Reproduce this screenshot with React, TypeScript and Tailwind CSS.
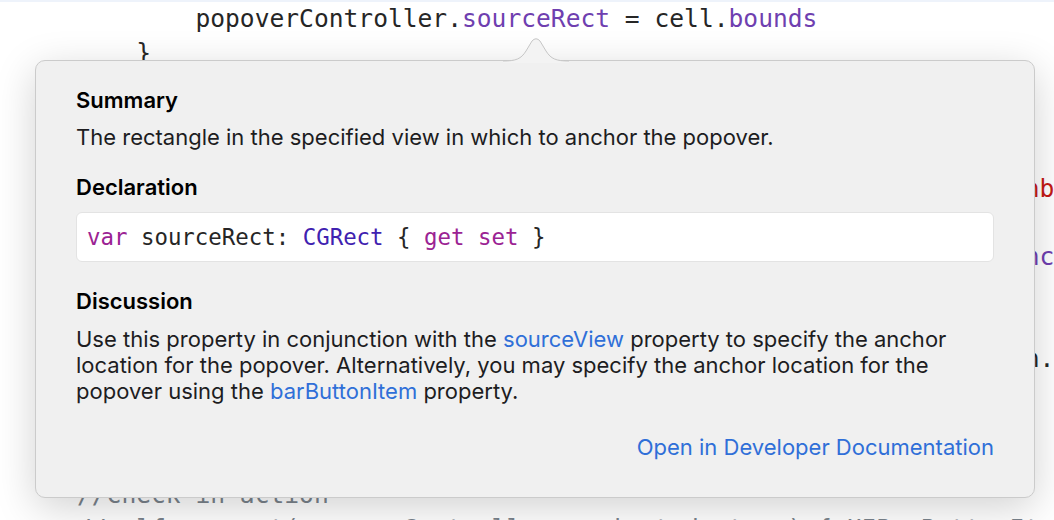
import React from "react";

type Seg = [string, string?];

const PLAIN = "#262626";
const PROP = "#6f3fb0";
const STR = "#c41a16";
const CMT = "#7a838c";

const fit = (s: string, n: number) => (s + " ".repeat(n)).slice(0, n);

const lines: Seg[][] = [
  [["        popoverController.", PLAIN], ["sourceRect", PROP], [" = cell.", PLAIN], ["bounds", PROP]],
  [["    }", PLAIN]],
  [["", PLAIN]],
  [["    ", PLAIN]],
  [["", PLAIN]],
  [[fit("        let alert = UIAlertController(title: \"Popover\", message: \"I", 64), PLAIN], ["nbox\"", STR]],
  [["", PLAIN]],
  [[fit("        alert.popoverPresentationController?.sourceView = self.insta", 64), PLAIN], ["nce", PROP]],
  [["", PLAIN]],
  [["", PLAIN]],
  [[fit("        popoverController.permittedArrowDirections = UIPopoverArrowDirectio", 64), PLAIN], ["n.", PLAIN]],
  [["", PLAIN]],
  [["", PLAIN]],
  [["", PLAIN]],
  [["//Check in action", CMT]],
  [["//self.present(popoverController, animated: true) { UIBarButtonItem.init() }", CMT]],
];

export default function App() {
  return (
    <div className="relative w-[1054px] h-[520px] overflow-hidden bg-white">
      <div className="h-[2px] bg-[#eef3fb]" />
      <div
        className="pl-[77px] whitespace-pre text-[24.6px] leading-[34px]"
        style={{ fontFamily: '"DejaVu Sans Mono", "Liberation Mono", monospace' }}
      >
        {lines.map((segs, i) => (
          <div key={i} className="h-[34px]">
            {segs.map(([t, c], j) => (
              <span key={j} style={{ color: c }}>
                {t}
              </span>
            ))}
          </div>
        ))}
      </div>

      {/* Popover */}
      <div
        className="absolute left-[35px] top-[60px] w-[1000px] h-[438px] rounded-[10px] bg-[#f0f0f0] border border-[#cbcbcb] shadow-[0_10px_40px_rgba(0,0,0,0.18)]"
        style={{ fontFamily: 'Inter, "Noto Sans", sans-serif' }}
      >
        <svg
          className="absolute left-[467px] top-[-25px]"
          width="66"
          height="27"
          viewBox="0 0 66 27"
        >
          <path
            d="M0 25 C13 25 18 23 23 15 L29 5 Q33 0.5 37 5 L43 15 C48 23 53 25 66 25 L66 27 L0 27 Z"
            fill="#f3f3f3"
          />
          <path
            d="M0 25 C13 25 18 23 23 15 L29 5 Q33 0.5 37 5 L43 15 C48 23 53 25 66 25"
            fill="none"
            stroke="#c6c6c6"
            strokeWidth="1"
          />
        </svg>
        <div className="flex flex-col px-[40px] pt-[26px] text-[22px] leading-[26px] text-[#1d1d1f]">
          <div className="font-semibold text-black">Summary</div>
          <div className="mt-[11px]">The rectangle in the specified view in which to anchor the popover.</div>
          <div className="mt-[24px] font-semibold text-black">Declaration</div>
          <div
            className="mt-[12px] h-[50px] flex items-center pl-[10px] bg-white rounded-[6px] border border-[#e3e3e3] whitespace-pre text-[22.4px]"
            style={{ fontFamily: '"DejaVu Sans Mono", "Liberation Mono", monospace' }}
          >
            <span className="text-[#9b2393]">var</span>
            <span className="text-[#262626]"> sourceRect: </span>
            <span className="text-[#3f22b0]">CGRect</span>
            <span className="text-[#262626]">{" { "}</span>
            <span className="text-[#9b2393]">get set</span>
            <span className="text-[#262626]">{" }"}</span>
          </div>
          <div className="mt-[26px] font-semibold text-black">Discussion</div>
          <div className="mt-[12px]">
            Use this property in conjunction with the <span className="text-[#2f6fd8]">sourceView</span> property to specify the anchor location for the popover. Alternatively, you may specify the anchor location for the popover using the <span className="text-[#2f6fd8]">barButtonItem</span> property.
          </div>
          <div className="mt-[30px] self-end text-[#2f6fd8]">Open in Developer Documentation</div>
        </div>
      </div>
    </div>
  );
}
